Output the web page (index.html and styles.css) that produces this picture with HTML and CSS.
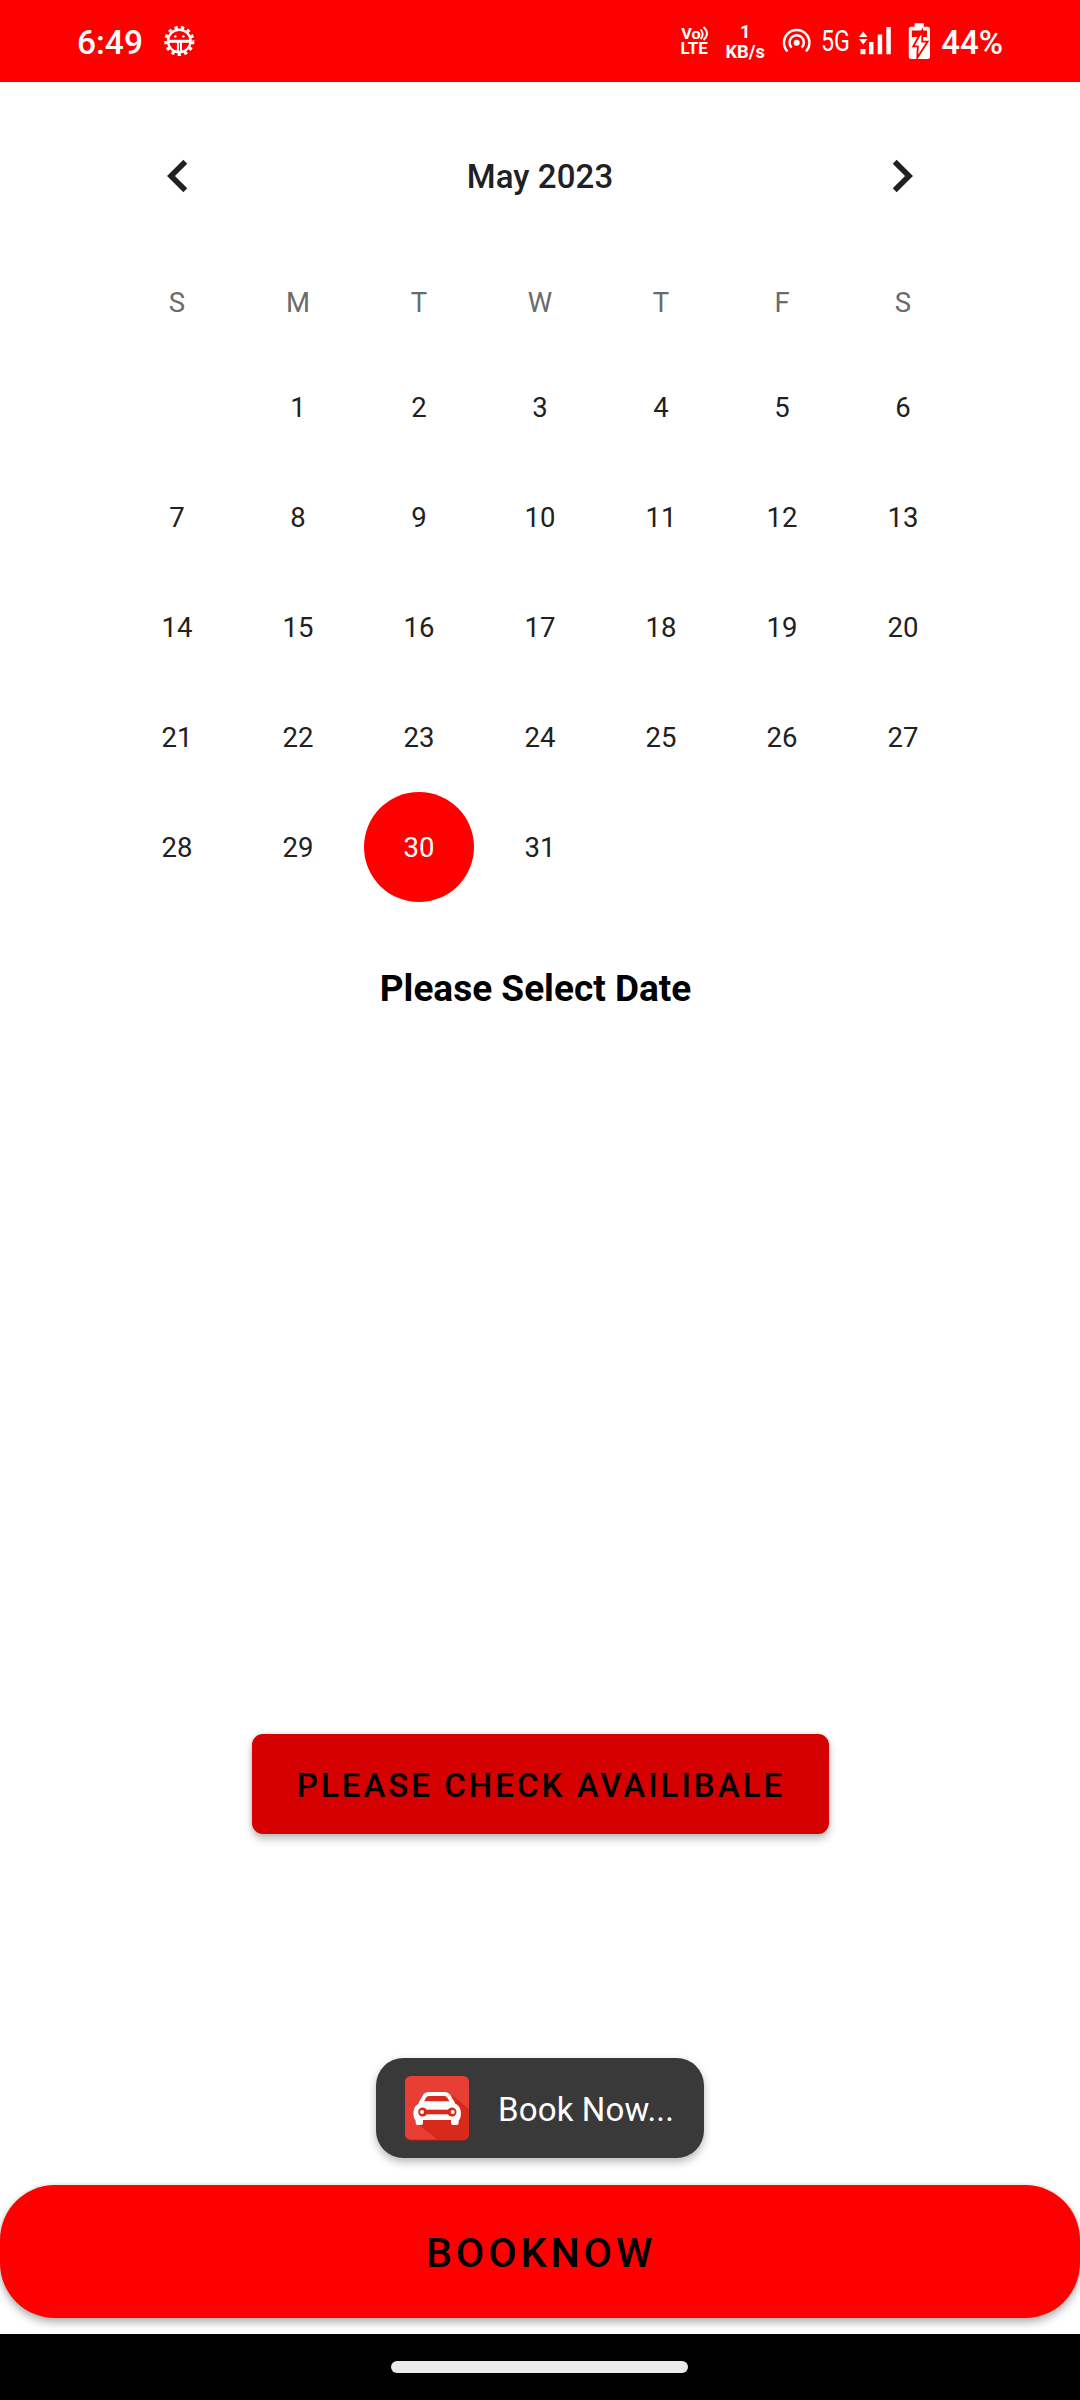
FILE: index.html
```html
<!DOCTYPE html>
<html lang="en">
<head>
<meta charset="utf-8">
<title>Booking</title>
<link rel="stylesheet" href="styles.css">
</head>
<body>
<header class="status">
  <span class="clock">6:49</span>
  <svg class="gear" width="32" height="82" viewBox="163 0 32 82" fill="none" stroke="#fff">
    <circle cx="179.3" cy="41" r="11.3" stroke-width="2.4"/>
    <circle cx="179.3" cy="41" r="13.4" stroke-width="3.4" pathLength="26" stroke-dasharray="1 1" stroke-dashoffset="-6"/>
    <path d="M168 41.3h23" stroke-width="3"/>
    <path d="M177.9 42v11M180.9 42v11" stroke-width="2"/>
    <g fill="#fff" stroke="none"><circle cx="175.3" cy="36.4" r="1.2"/><circle cx="183.4" cy="36.4" r="1.2"/></g>
  </svg>
  <div class="indicators">
    <svg width="29" height="82" viewBox="681 0 29 82">
      <text x="681.2" y="39.300" class="lte" font-size="14.5" textLength="19.5" lengthAdjust="spacingAndGlyphs">Vo</text>
      <text x="680.4" y="54.200" class="lte" font-size="16.5" textLength="27.300" lengthAdjust="spacingAndGlyphs">LTE</text>
      <path d="M700.7 29.5q4 5 0 9.5M703.5 27q7 6.500 0 13" fill="none" stroke="#fff" stroke-width="1.9"/>
    </svg>
    <div class="speed"><span>1</span><span>KB/s</span></div>
    <svg class="hotspot" width="30" height="82" viewBox="782 0 30 82" fill="none" stroke="#fff" stroke-width="2.5">
      <circle cx="796.7" cy="42.700" r="3" fill="#fff" stroke="none"/>
      <path d="M791.700 47.700A7.200 7.200 0 1 1 801.700 47.700M787.500 51.500A12.700 12.700 0 1 1 805.900 51.500"/>
    </svg>
    <svg class="network" width="38" height="82" viewBox="817 0 38 82">
      <text x="821" y="50.800" class="net" font-size="29" textLength="29" lengthAdjust="spacingAndGlyphs">5G</text>
    </svg>
    <svg class="signal" width="33" height="82" viewBox="859 0 33 82" fill="#fff">
      <path d="M859 37l4.200-5.500 4.200 5.500zM859 39l4.200 5.500 4.200-5.500zM860.500 49h5v5.200h-5zM869 42h4.500v12.200h-4.500zM877.700 34.500h4.500v19.700h-4.500zM886.300 27h4.500v27.200h-4.500z"/>
    </svg>
    <svg class="battery" width="22" height="82" viewBox="908 0 22 82">
      <path d="M914.500 23.200h9.300v3.500h3.700q2.500 0 2.500 2.500v27.300q0 2.500-2.500 2.500h-16.200q-2.500 0-2.500-2.500v-27.300q0-2.500 2.500-2.500h3.200z" fill="#fff"/>
      <path d="M911.800 30.500h15.200v6.500h-15.200z" fill="#f00"/>
      <path d="M921.300 34 914.800 45.500h4L918.300 54.500 926 42.500h-4.600z" fill="#fff" stroke="#f00" stroke-width="3.600"/>
      <path d="M921.300 34 914.800 45.500h4L918.300 54.500 926 42.500h-4.600z" fill="#fff"/>
    </svg>
    <span class="percent">44%</span>
  </div>
</header>

<main class="page">
  <section class="calendar">
    <div class="month">
      <svg width="22" height="34" viewBox="0 0 22 34" fill="none" stroke="#212121" stroke-width="5.600"><path d="M19.300 2.800 5 17l14.300 14.200"/></svg>
      <h1>May 2023</h1>
      <svg width="22" height="34" viewBox="0 0 22 34" fill="none" stroke="#212121" stroke-width="5.600"><path d="M2.700 2.800 17 17 2.700 31.200"/></svg>
    </div>
    <div class="weekdays"><span>S</span><span>M</span><span>T</span><span>W</span><span>T</span><span>F</span><span>S</span></div>
    <div class="days">
      <span></span><span>1</span><span>2</span><span>3</span><span>4</span><span>5</span><span>6</span>
      <span>7</span><span>8</span><span>9</span><span>10</span><span>11</span><span>12</span><span>13</span>
      <span>14</span><span>15</span><span>16</span><span>17</span><span>18</span><span>19</span><span>20</span>
      <span>21</span><span>22</span><span>23</span><span>24</span><span>25</span><span>26</span><span>27</span>
      <span>28</span><span>29</span><span class="selected">30</span><span>31</span>
    </div>
  </section>
  <h2 class="prompt">Please Select Date</h2>
  <button class="check">PLEASE CHECK AVAILIBALE</button>
  <button class="book">BOOKNOW</button>
  <div class="toast">
    <svg width="64" height="65" viewBox="0 0 192 195">
      <rect y="4" width="192" height="190" rx="17" fill="#9c2419"/>
      <rect width="192" height="191" rx="17" fill="#e83e35"/>
      <path d="M146 60 192 100v74q0 17-17 17H98L35 142z" fill="#d82a1a"/>
      <path d="M47 82 58 62Q62 54 72 54h46q10 0 14 8l12 20z" fill="#d82a1a" stroke="#fff" stroke-width="12" stroke-linejoin="round"/>
      <path d="M46 80h100q22 8 22 33 0 12-7 21v7q0 6-6 6h-11q-6 0-6-6v-9H54v9q0 6-6 6H38q-6 0-6-6v-7q-7-9-7-21 0-25 21-33z" fill="#fff"/>
      <path d="M61 101h71v14H61z" fill="#d82a1a"/>
      <circle cx="53" cy="108" r="13.500" fill="#d82a1a"/><circle cx="141" cy="108" r="13.500" fill="#d82a1a"/>
      <circle cx="51" cy="108" r="6" fill="#fff"/><circle cx="143" cy="108" r="6" fill="#fff"/>
    </svg>
    <span>Book Now...</span>
  </div>
</main>
<footer class="nav"><div class="handle"></div></footer>
</body>
</html>
```

FILE: styles.css
```css
* { box-sizing: border-box; }
body {
  margin: 0;
  width: 1080px;
  height: 2400px;
  display: flex;
  flex-direction: column;
  background: #fff;
  font-family: Roboto, "Liberation Sans", sans-serif;
  overflow: hidden;
}
svg { display: block; flex: none; }
h1, h2 { margin: 0; }

.status {
  height: 82px;
  padding: 0 77px;
  display: flex;
  align-items: center;
  background: #f00;
  color: #fff;
  font-weight: 500;
}
.clock { width: 86px; font-size: 33.5px; padding-top: 3px; }
.indicators { margin-left: auto; display: flex; align-items: center; }
.lte { fill: #fff; font-weight: 700; }
.net { fill: #fff; font-weight: 400; }
.speed {
  width: 48px;
  margin: 1px 8px 0 11px;
  display: flex;
  flex-direction: column;
  align-items: center;
  font-size: 18.3px;
  line-height: 20px;
  font-weight: 700;
}
.hotspot { margin-left: 5px; }
.network { margin-left: 5px; }
.signal { margin-left: 4px; }
.battery { margin-left: 16px; }
.percent { margin-left: 11px; font-size: 33px; padding-top: 3px; }

.page {
  position: relative;
  flex: 1;
  display: flex;
  flex-direction: column;
  align-items: center;
}
.calendar { width: 847px; padding-top: 39px; }
.month {
  height: 110px;
  padding: 0 49.5px;
  display: flex;
  align-items: center;
  justify-content: space-between;
  color: #212121;
}
.month h1 { font-size: 33px; font-weight: 500; letter-spacing: .1px; }
.weekdays, .days {
  display: grid;
  grid-template-columns: repeat(7, 121px);
  justify-items: center;
  font-size: 27.5px;
}
.weekdays { margin-top: 21px; line-height: 102px; height: 100px; color: #6b6b6b; }
.days { grid-auto-rows: 110px; line-height: 112px; color: #212121; }
.days span { width: 110px; height: 110px; text-align: center; }
.days .selected { border-radius: 50%; background: #f00; color: #fff; }
.prompt {
  margin: 57px 9px 0 0;
  font-size: 37px;
  line-height: 60px;
  font-weight: 700;
  color: #000;
}
button {
  border: 0;
  font-family: inherit;
  font-weight: 500;
  color: #000;
}
.check {
  width: 577px;
  height: 100px;
  margin-top: 715px;
  padding: 3px 0 0 2px;
  border-radius: 11px;
  background: #d50000;
  font-size: 33px;
  letter-spacing: 3.03px;
  box-shadow: 0 5px 8px rgba(0, 0, 0, .25), 0 0 4px rgba(0, 0, 0, .12);
}
.book {
  width: 1080px;
  height: 133px;
  margin-top: 351px;
  padding: 3px 0 0 2px;
  border-radius: 55px;
  background: #f00;
  font-size: 41.25px;
  letter-spacing: 3.9px;
  box-shadow: 0 5px 9px rgba(0, 0, 0, .28), 0 0 4px rgba(0, 0, 0, .12);
}
.toast {
  position: absolute;
  left: 376px;
  top: 1976px;
  height: 100px;
  width: 328px;
  padding-left: 29px;
  display: flex;
  align-items: center;
  gap: 29px;
  border-radius: 27.5px;
  background: #393939;
  color: #fff;
  font-size: 33px;
  letter-spacing: .15px;
  white-space: nowrap;
  box-shadow: 0 4px 8px rgba(0, 0, 0, .28);
}
.toast span { padding-top: 3px; }
.nav {
  height: 66px;
  padding: 27px 1px 0 0;
  background: #000;
}
.handle {
  width: 297px;
  height: 12px;
  margin: 0 auto;
  border-radius: 6px;
  background: #ebebeb;
}
```
